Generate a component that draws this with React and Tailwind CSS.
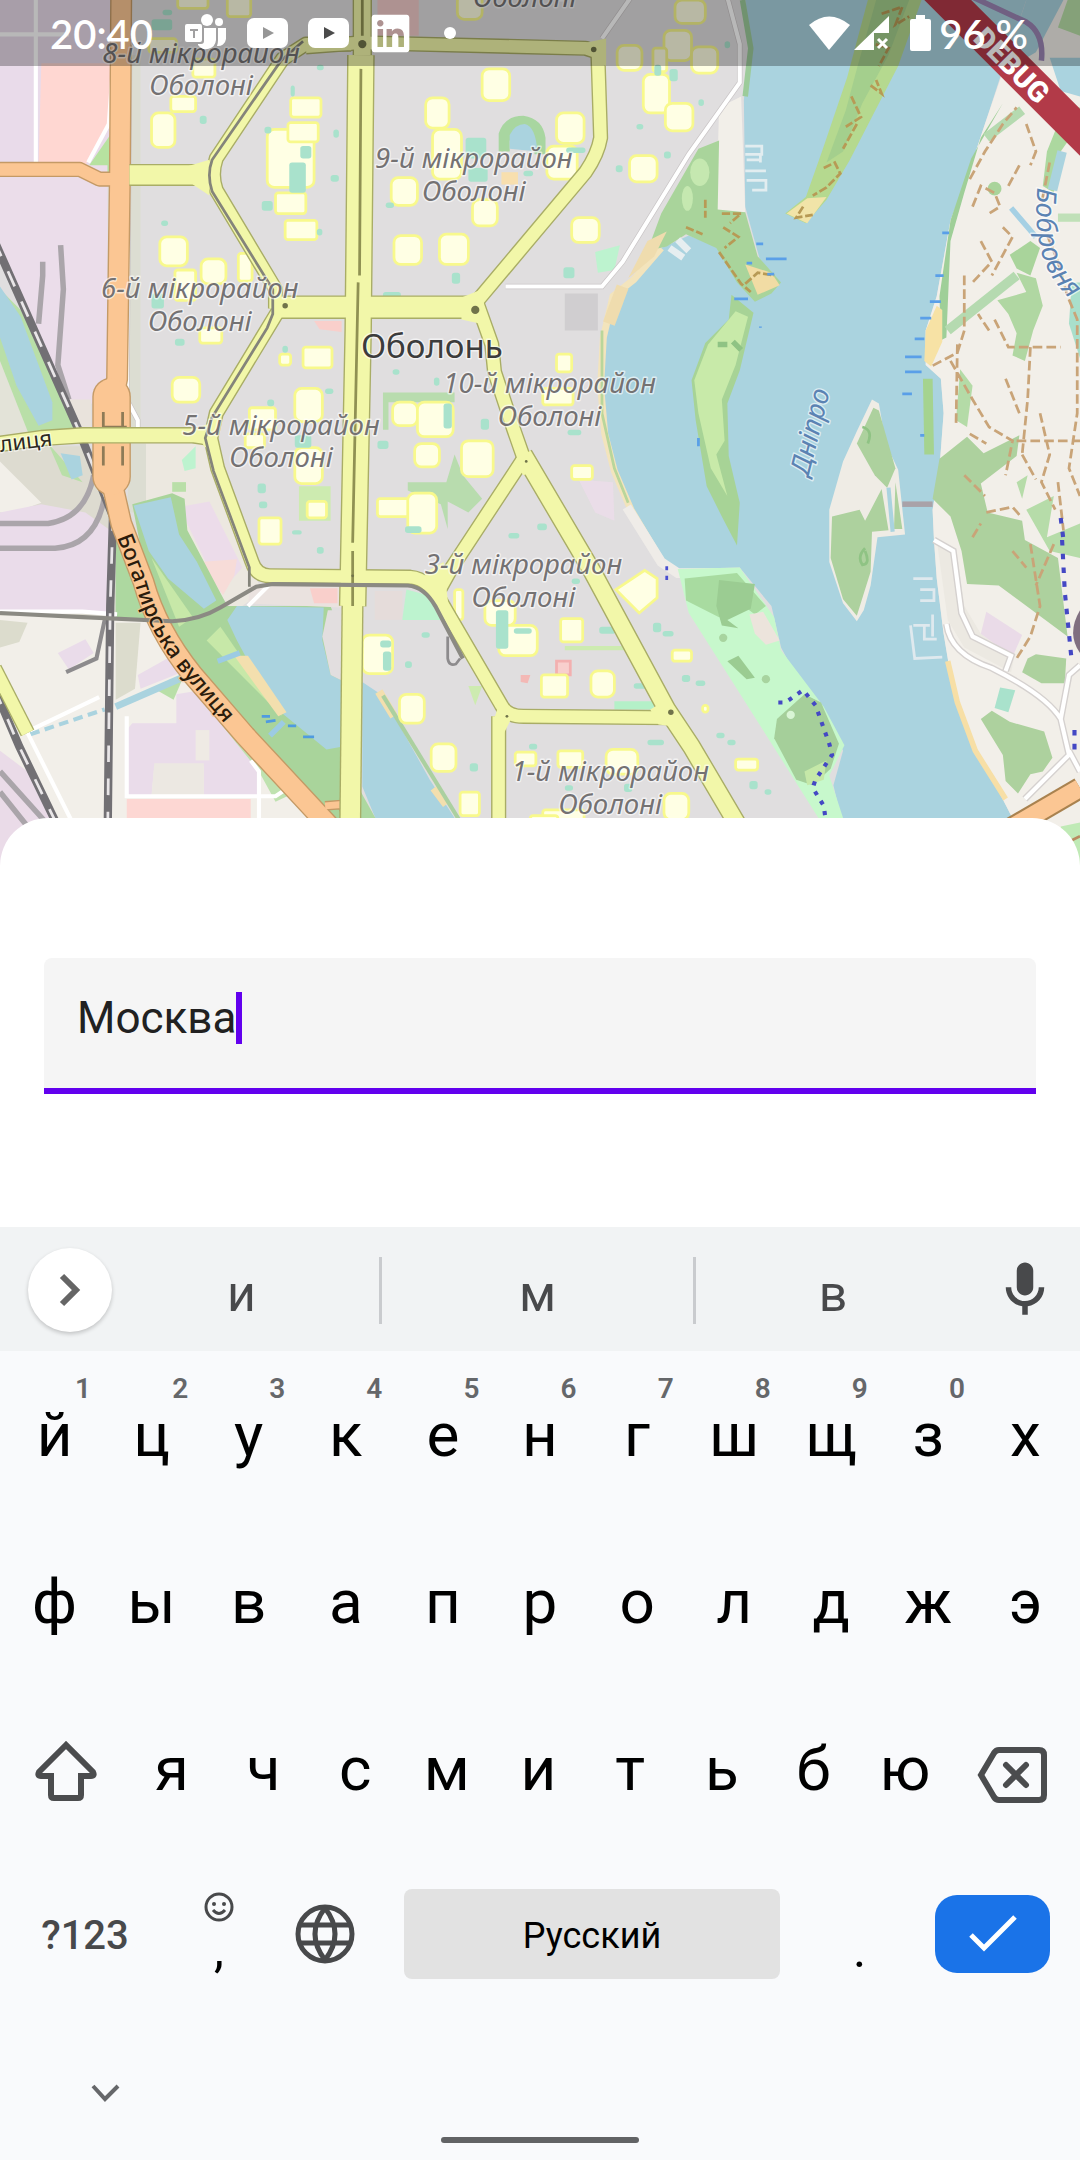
import React from "react";
import { FaLinkedin } from "react-icons/fa";

/* ---------- map data ---------- */

const SCHOOLS = [
  [129, -4, 22, 10], [165, -4, 17, 16], [140, 43, 16, 13], [124, 70, 18, 11], [110, 82, 17, 25],
  [211, 71, 22, 14], [194, 94, 34, 42], [209, 89, 22, 14], [200, 140, 22, 15], [207, 160, 23, 14],
  [350, 50, 20, 23], [309, 71, 17, 22], [314, 94, 21, 36], [284, 129, 19, 20], [343, 145, 18, 19],
  [286, 171, 20, 21], [319, 170, 21, 22], [116, 172, 20, 21], [146, 188, 18, 18], [127, 196, 15, 22],
  [173, 184, 10, 20], [490, 0, 22, 17], [448, 33, 18, 18], [482, 22, 20, 22], [502, 34, 19, 19],
  [474, 35, 10, 17], [467, 54, 19, 28], [483, 75, 20, 20], [404, 82, 20, 22], [397, 106, 22, 24],
  [457, 113, 20, 19], [415, 158, 20, 18], [332, -4, 18, 18], [108, 28, 20, 10], [145, 238, 16, 11],
  [220, 252, 21, 15], [203, 257, 8, 8], [125, 274, 20, 18], [214, 282, 20, 24], [181, 296, 19, 16],
  [178, 315, 14, 10], [214, 325, 20, 26], [188, 376, 16, 19], [285, 292, 18, 17], [303, 292, 26, 25],
  [301, 322, 18, 17], [335, 320, 23, 26], [274, 362, 25, 13], [296, 358, 21, 29], [223, 364, 14, 12],
  [404, 257, 11, 13], [394, 282, 22, 12], [415, 338, 15, 10], [263, 461, 22, 28], [290, 504, 18, 21],
  [313, 540, 18, 20], [334, 575, 14, 17], [330, 428, 6, 22], [352, 436, 22, 18], [362, 454, 28, 22],
  [407, 449, 16, 17], [393, 490, 19, 16], [429, 487, 17, 19], [488, 472, 14, 8], [405, 545, 18, 12],
  [440, 544, 23, 18], [374, 546, 15, 10], [534, 551, 16, 8], [482, 576, 18, 19], [394, 588, 30, 8],
  [510, 512, 4, 5], [385, 592, 20, 5],
];

const PITCHES = [
  [110, 14, 15, 8], [118, 7, 7, 4], [210, 118, 12, 22], [218, 106, 8, 9], [338, 100, 15, 15],
  [340, 122, 14, 10], [475, 47, 5, 8], [486, 50, 6, 9], [411, 107, 14, 4], [110, 213, 9, 11],
  [322, 293, 6, 18], [214, 316, 12, 9], [187, 351, 6, 7], [188, 364, 6, 5], [360, 443, 9, 28],
  [373, 456, 13, 4], [276, 465, 8, 5], [278, 473, 6, 14], [294, 382, 12, 5],
  [230, 397, 5, 5], [274, 320, 8, 6], [349, 304, 6, 8], [369, 387, 8, 4], [412, 312, 10, 4],
  [190, 146, 8, 7], [211, 62, 3, 8], [145, 84, 5, 6], [230, 47, 5, 4], [242, 94, 4, 6],
  [240, 127, 6, 5], [192, 92, 5, 5], [230, 166, 4, 5], [117, 160, 5, 4], [280, 147, 6, 4],
  [328, 198, 6, 8], [278, 212, 13, 7], [127, 246, 7, 5], [285, 268, 5, 4], [315, 274, 4, 6],
  [236, 282, 6, 4], [194, 290, 5, 5], [205, 251, 4, 5], [380, 124, 7, 4], [482, 110, 5, 5],
  [507, 72, 4, 5], [526, 30, 4, 5], [462, 90, 5, 4], [447, 120, 5, 5], [409, 194, 8, 8],
  [435, 455, 12, 5], [474, 452, 6, 7], [481, 458, 8, 4], [495, 490, 6, 5], [505, 494, 7, 4],
  [460, 496, 11, 4], [520, 532, 6, 4], [528, 537, 6, 4], [544, 567, 6, 6], [555, 573, 5, 4],
  [470, 537, 12, 4], [294, 480, 5, 5], [306, 459, 6, 4], [341, 554, 6, 6], [384, 540, 6, 4],
  [390, 380, 7, 5], [415, 420, 6, 4], [453, 569, 6, 6], [410, 570, 6, 4], [212, 385, 7, 3],
];

const CASING = "#a9ad66";
const YELLOW = "#f2f7a9";

const YELLOW_ROADS = [
  ["M94 127H148L157 125", 14],
  ["M255 32L222 32L205 43L157 115Q153 127 157 138L200 210V224", 9],
  ["M222 34L262 31L425 35L434 38", 9],
  ["M434 38L436 100Q434 112 425 125L346 219V230", 9],
  ["M263 -5V40", 12],
  ["M262 40L260 240L256 440", 18],
  ["M256 430L254 620", 14],
  ["M200 223H345", 15],
  ["M203 224L157 300L153 318L158 340L183 408Q186 418 196 418L298 419Q312 420 322 440L364 512Q368 520 380 520L488 521", 9],
  ["M-5 323L30 318L60 316H140L154 318", 10],
  ["M346 219L357 250L359 270L373 312L380 332", 9],
  ["M380 330L430 415L484 515L502 542L548 620", 12],
  ["M380 333L328 412L318 430", 9],
  ["M362 520V620", 9],
  ["M-4 485L20 532", 9],
];

const MICRO = [
  ["8-й мікрорайон", 146, 46, 69],
  ["9-й мікрорайон", 344, 122, 146],
  ["6-й мікрорайон", 145, 216, 240],
  ["5-й мікрорайон", 204, 316, 339],
  ["10-й мікрорайон", 399, 285, 309],
  ["3-й мікрорайон", 380, 417, 441],
  ["1-й мікрорайон", 443, 567, 591],
];

const TRAILS =
  "M704 130L715 110L728 90L738 78M745 90L752 110L748 120M706 150L712 135L722 140L726 150L718 155M700 200V240L695 256L676 266M712 175L720 190L706 205M728 165L735 172L720 200M740 120L732 135M760 170L768 190L775 215L782 232V300L776 340L784 360M722 232L732 252L770 252M748 252L746 290L742 330M690 262L706 290L718 310L735 320L730 345M695 250L694 310M718 240L710 228M755 300L762 330L756 350L766 370M738 320H784M742 330L752 348M700 345L715 360M716 372L735 368L742 376M706 390L712 380M768 350L772 385M748 395L755 440L748 462L738 478M735 400L745 412M765 395L752 425M762 118L756 148M730 275L740 300M704 315L716 322";

function CityMap() {
  return (
    <svg viewBox="0 0 784 634" className="block h-auto w-full" role="img" aria-label="Мапа: Оболонь">
      <rect width="784" height="634" fill="#e0dedf" />

      {/* land use, west side */}
      <path d="M0 0H82V120H0Z" fill="#e9dbea" />
      <path d="M30 46H80V86L62 120H28Z" fill="#ffd7d2" />
      <path d="M80 98V128L64 121Z" fill="#b7e2a0" />
      <path d="M0 120H78V275L62 300H50L0 190Z" fill="#ebddea" />
      <path d="M50 290H66V318H50Z" fill="#e9e3dc" />
      <path d="M92 40H102V316H92Z" fill="#dcddd2" />
      <path d="M0 210L15 225L62 318H0Z" fill="#b9dfa8" />
      <path d="M0 262L22 318H0Z" fill="#e3e3d8" />
      <path d="M0 208L15 230L38 292V305L28 309L12 280L0 245Z" fill="#aad3df" />
      <path d="M0 324H60L84 370V450H0Z" fill="#dddbd0" />
      <path d="M0 335L30 365L10 372H0Z" fill="#f2efe9" />
      <path d="M35 322L60 350L45 345Z" fill="#b9dfa8" />
      <path d="M44 329L58 331L60 345L52 348Z" fill="#aad3df" />
      <path d="M0 372L30 366L62 372L80 385V445H0Z" fill="#eadcea" />
      <path d="M105 322H150L190 430L170 444L150 420L105 362Z" fill="#ece8e0" />
      <path d="M95 322H106V372H92Z" fill="#dcddd2" />
      <path d="M130 368L152 364L176 412L160 430Z" fill="#ecdcea" />
      <path d="M145 408L172 406L170 418L162 432Z" fill="#f7dcd8" />
      <path d="M0 447H140L250 600V634H0Z" fill="#f2efe9" />
      <path d="M0 450L20 452L14 466L0 470Z" fill="#dcdccd" />
      <path d="M84 452H102L98 500L84 508Z" fill="#dcdccd" />
      <path d="M42 474L62 464L68 474L50 486Z" fill="#eadcea" />
      <path d="M100 490L125 476L132 488L102 500Z" fill="#eadcea" />
      <path d="M96 525H128L128 504L140 502L158 520L188 552V578H148V556H112L110 578H92V530Z" fill="#eadcea" />
      <path d="M112 554H148V578H110Z" fill="#ece8e2" />
      <path d="M142 530H152V552H142Z" fill="#efeae4" />
      <path d="M92 580H182V600H92Z" fill="#fdd7d3" />
      <path d="M0 545L20 560L42 600L20 634H0Z" fill="#eadbe8" />
      <path d="M84 372L92 372L114 450H84Z" fill="#add8a0" />
      <path d="M112 500L132 494L126 508Z" fill="#b9dfa8" />
      <path d="M140 500L215 575L200 582L188 560Z" fill="#bfe2b0" />
      <path d="M96 366L125 358L134 362L136 385L165 440H240L250 470V600H240L112 448Z" fill="#a9d49b" />
      <path d="M110 405L140 448L130 455Z" fill="#c7e8a8" />
      <path d="M160 455L205 520L190 505L150 465Z" fill="#c7e8a8" />
      <path d="M97 367L124 361L130 388L143 408L157 436L148 442L122 420L108 400Z" fill="#aad3df" />
      <path d="M172 440L235 441L234 465L240 490L248 494V542L237 544L205 518L185 489L172 465L165 450Z" fill="#aad3df" />
      <path d="M170 476L180 476L208 517L202 520Z" fill="#f3dfae" />
      <path d="M238 443H248V494L240 490L234 462Z" fill="#e2dedf" />
      <path d="M182 425H248V441L180 438Z" fill="#eae2df" />
      <path d="M225 427H245V438H228Z" fill="#f9cfcb" />
      <path d="M263 495L275 503L288 523L312 566L334 600H275L263 571Z" fill="#aad3df" />
      <path d="M262 575L276 600H262Z" fill="#add8a0" />
      <path d="M275 502L286 520M315 572L324 584" stroke="#f3dfae" strokeWidth="6" />
      <path d="M278 505L335 598" stroke="#abd0a0" strokeWidth="3" fill="none" />
      <path d="M84 513L132 492" stroke="#aad3df" strokeWidth="5" />
      <path d="M22 533L76 515" stroke="#aad3df" strokeWidth="3" strokeDasharray="7 4" />
      <path d="M158 480L174 474M196 534L206 524" stroke="#9ccbe3" strokeWidth="4" />
      <path d="M272 429H292V450H272Z" fill="#e5dcda" />
      <path d="M292 450L295 428L310 432L320 450Z" fill="#bdf3cf" />
      <path d="M228 233H248V241L232 239Z" fill="#f9cfcb" />
      <path d="M274 0H304V26H274Z" fill="#f1cbc9" />
      <path d="M132 334L142 324V340L134 342Z" fill="#bdf3cf" />
      <path d="M125 350H135V357H125Z" fill="#b9dfa8" />
      <path d="M432 183L450 178L446 196L434 198Z" fill="#bdf3cf" />
      <path d="M217 353H240V378H217Z" fill="#cdebb0" />
      <path d="M278 285H330V292H282V312H278ZM296 350H324L330 330L336 345L350 362L340 372L325 364V384L320 366L296 356Z" fill="#b8dcae" />
      <path d="M410 469H455V472H410ZM340 498H350L345 512Z" fill="#cdebb0" />
      <path d="M446 509H476L474 515H446Z" fill="#b4f0c8" />
      <path d="M420 348L445 350L446 378L432 372Z" fill="#ecdcea" opacity=".8" />
      <path d="M410 213H434V240H410Z" fill="#d0ced0" />
      <path d="M404 480H414V490H404Z" fill="#f8cfcd" stroke="#f3b0b0" strokeWidth="2" />
      <path d="M378 490L385 490L383 496L378 495Z" fill="#f3b8b5" />
      <path d="M362 110V97Q366 84 380 84Q394 86 396 100V112H388V102H370V110Z" fill="#a8d6a0" />
      <path d="M370 108V98Q374 90 381 90Q389 92 390 110Z" fill="#aad3df" />
      <path d="M364 125H376V134H364Z" fill="#f8dfae" />

      {/* schools and sports pitches */}
      {SCHOOLS.map(([x, y, w, h], i) => (
        <rect key={i} x={x} y={y} width={w} height={h} rx={Math.min(w, h) > 16 ? 5 : 2} fill="#ffffe4" stroke="#f8f98c" strokeWidth="2" />
      ))}
      <path d="M447 428L468 414L477 420V434L464 445Z" fill="#ffffe4" stroke="#f8f98c" strokeWidth="2" />
      {PITCHES.map(([x, y, w, h], i) => (
        <rect key={i} x={x} y={y} width={w} height={h} rx="2" fill="#a9e2cc" />
      ))}

      {/* Dnipro */}
      <path
        d="M541 0L545 35L542 48L540 73L541 150L552 190L535 187L515 177L500 171L480 180L460 203L445 215L438 245L436 280L438 310L445 340L457 370L480 405L492 413L537 412L560 440L567 470L583 500L600 520L612 545L605 570L612 600V634H760L735 594L715 555L700 525L690 490L685 460L680 420L678 392L677 370L682 340L685 300L683 275L672 265L672 240L680 215L690 160L705 120L715 90L728 50L745 0Z"
        fill="#aad3df"
      />
      <path
        d="M784 0H770L752 35L728 52L715 90L705 120L690 160L680 215L672 240V265L683 275L685 300L682 340L677 370L678 392L680 420L685 460L690 490L700 525L715 555L735 594L760 634H784Z"
        fill="#f2efe9"
      />
      <path d="M745 0H772L752 38L728 52Z" fill="#aad3df" />
      <path d="M762 42H784V70L770 66Z" fill="#aad3df" />
      <path d="M775 0H784V26L768 20Z" fill="#b9dfa8" />
      {/* west bank beach */}
      <path d="M480 180L460 203L445 215L438 245L436 280L439 315L446 342L458 370L480 407" stroke="#f3e4bc" strokeWidth="5" fill="none" />
      <path d="M452 208L442 235" stroke="#efdcae" strokeWidth="9" />
      <path d="M437 240L437 300L446 340L456 365" stroke="#b9d69b" strokeWidth="2" fill="none" />
      <path d="M455 368L480 408L492 416H537" stroke="#efece8" strokeWidth="7" fill="none" />
      {/* peninsula */}
      <path d="M522 78L538 70L541 154H520Z" fill="#f2efe9" />
      <path d="M539 0L545 35L541 70" stroke="#9ccb9a" strokeWidth="4" fill="none" />
      <path d="M507 108L522 102L521 152L541 154L550 186L567 205L560 213L548 219L535 205L520 180L498 170L484 179L470 182L480 155Z" fill="#a9d49b" />
      <ellipse cx="508" cy="125" rx="7" ry="10" fill="#c5e8b0" />
      <ellipse cx="499" cy="144" rx="4" ry="9" fill="#c5e8b0" />
      <path d="M484 168L475 186L456 202L470 175Z" fill="#efdcae" />
      <path d="M541 192L560 198L566 207L550 214Z" fill="#f1dca4" />
      <path d="M524 155H538L530 162M512 145V158M525 165L536 172L526 180M522 183L538 206L545 212M498 165L510 170M541 206L550 198L562 200" stroke="#b79a55" strokeWidth="2" strokeDasharray="6 2" fill="none" />
      <path d="M541 106H553V112H541M542 116H553M541 124H556M542 131H556V138H546M552 112V118" stroke="#e2edf0" strokeWidth="2" fill="none" />
      <path d="M486 180L496 187M492 174L500 182" stroke="#e6eef0" strokeWidth="5" />
      {/* northern island */}
      <path d="M630 0H669L652 48L617 116L600 145L585 162L570 155L585 143L597 109L615 56Z" fill="#b5d98f" />
      <path d="M636 0H660L645 40L626 75L612 110L600 118L614 80L622 50Z" fill="#a4cf8d" />
      <path d="M571 155L586 144L600 143L586 162Z" fill="#f1e4a8" />
      <path d="M640 10L655 5L650 18L660 12M628 30L645 35L638 48M618 70L625 85L614 92M632 62L640 68L636 58M622 90L612 108M598 122L606 118L610 126L600 136L590 142M583 150L578 158L590 156" stroke="#b79a55" strokeWidth="2" strokeDasharray="6 2" fill="none" />
      {/* long island */}
      <path d="M531 214L547 227L537 269L528 293L529 331L537 365L535 396L525 377L513 353L505 305L502 276L512 249L529 232Z" fill="#a7d396" />
      <path d="M534 226L543 230L534 265L524 290L526 320L520 330L528 360L516 340L507 300L504 276L514 250Z" fill="#c8eaa9" />
      <path d="M521 250H528M532 248L538 254" stroke="#8fc384" strokeWidth="4" />
      {/* eastern island */}
      <path d="M633 290L638 293L643 322L652 341L657 388L637 390L632 425L627 443L622 451L612 438L602 408L602 370L612 335L622 313Z" fill="#efece5" />
      <path d="M634 296L638 298L650 340L644 354L635 345L622 322Z" fill="#add19e" />
      <path d="M604 375L624 370L628 378L640 355L645 385L633 386L632 415L622 447L612 435L603 405Z" fill="#add19e" />
      <path d="M650 350L655 384H649Z" fill="#add19e" />
      <path d="M645 354L648 386" stroke="#aad3df" strokeWidth="3" />
      <path d="M626 310Q634 312 630 322M628 398Q622 404 626 410Q632 410 628 400" stroke="#8fc384" strokeWidth="2" fill="none" />

      {/* riverside park */}
      <path d="M492 413L537 412L562 448L567 472L598 513L613 541L602 563L614 600H598L552 527L500 445Z" fill="#c7f8cc" />
      <path d="M497 420L535 416L556 440L548 446L540 440L522 448L498 436Z" fill="#a8dba0" />
      <path d="M522 421L548 424L545 442L528 450L536 456L524 454L520 440Z" fill="#9bcc92" />
      <path d="M544 446L554 444L566 465L556 468L548 460Z" fill="#ece4dc" />
      <path d="M528 480L536 476L548 492L542 493Z" fill="#9bcc92" />
      <circle cx="556" cy="493" r="3" fill="#a8d49f" />
      <circle cx="525" cy="463" r="3" fill="#a8d49f" />
      <path d="M584 504L596 510L609 540L603 558L590 570L578 566L562 536L564 522Z" fill="#a5cf9a" />
      <circle cx="574" cy="519" r="3" fill="#d9f5d5" />
      <path d="M584 560L600 552L598 566L586 570Z" fill="#c5e8a8" />
      <path d="M565 510H570L583 501L592 512L602 540L604 548L592 566L590 572L598 585L600 600" stroke="#4448c4" strokeWidth="3" strokeDasharray="3 5" fill="none" />
      <path d="M484 411V421" stroke="#4a4fd0" strokeWidth="2" strokeDasharray="3 4" />

      {/* east bank */}
      <path d="M728 75L712 100L700 140L690 175L687 245L683 247L682 215L690 160L705 115Z" fill="#9fcf98" />
      <path d="M742 80L716 100M738 200L688 240" stroke="#b5dab0" strokeWidth="7" />
      <path d="M680 222L684 225V248L676 266L671 262L672 240Z" fill="#f7e2a5" />
      <path d="M670 275H677L678 330H671Z" fill="#a5d38f" />
      <path d="M697 268L706 280L702 310L694 305Z" fill="#b4dba7" />
      <path d="M724 218L745 212L738 198L752 202L757 222L750 240L744 262L735 258L738 242L732 228Z" fill="#b0d7a2" />
      <path d="M733 185L748 175L755 180L748 200L738 195Z" fill="#a9d49b" />
      <circle cx="722" cy="137" r="5" fill="#a9d49b" />
      <path d="M760 110L772 80L784 78V90L770 110L765 140L757 135Z" fill="#acd89f" />
      <path d="M771 110L764 138" stroke="#aad3df" strokeWidth="7" />
      <path d="M768 155H784V161H768Z" fill="#c0e0b8" />
      <path d="M734 151L746 165L752 172" stroke="#a5d0e4" strokeWidth="4" fill="none" />
      <path d="M778 205H784V260L776 235Z" fill="#a9dfcb" />
      <path d="M682 333L702 317L714 329L740 316L738 331L712 351L717 372L742 378L744 392L768 405L775 462L752 445L725 425L702 424L698 400L690 375L677 362Z" fill="#add19e" />
      <path d="M738 350L746 345L742 362M745 370L765 360L760 390L784 380V405L762 400Z" fill="#b6dca9" />
      <path d="M680 392L694 398L700 440L712 460L736 478L734 488L700 470L688 450Z" fill="#ece9e2" />
      <path d="M716 444L742 461L735 477L712 460Z" fill="#eadbe8" />
      <path d="M746 478L752 475L774 478L773 496L756 496L742 488Z" fill="#add19e" />
      <path d="M726 499L737 501L732 517L722 514Z" fill="#a9e2cc" />
      <path d="M712 522L720 516L733 524L758 531L764 550L757 560L748 562L739 576L730 567L728 548Z" fill="#add19e" />
      <path d="M688 480L695 510L708 545L730 580" stroke="#f7dfa6" strokeWidth="4" fill="none" />
      <path d={TRAILS} fill="none" stroke="#c9a478" strokeWidth="2" strokeDasharray="7 3" />
      <path d="M678 392L692 400L698 445L706 462L734 476L730 487M687 453Q690 475 720 485Q760 505 770 522L776 548L744 580M776 545L784 560M770 522L776 490L784 483" fill="none" stroke="#d5d1cf" strokeWidth="5" />
      <path d="M678 392L692 400L698 445L706 462L734 476L730 487M687 453Q690 475 720 485Q760 505 770 522L776 548L744 580M776 545L784 560M770 522L776 490L784 483" fill="none" stroke="#fff" strokeWidth="3" />
      <path d="M771 392L773 430L778 480M780 530V548M770 376L772 392" stroke="#4448c4" strokeWidth="3" strokeDasharray="4 6" fill="none" />
      <path d="M663 420H677M668 428H678V436H668M663 454H675M661 454L664 478L684 477M671 454V464H680M677 446V462" stroke="#dfe9ee" strokeWidth="2" fill="none" />
      <path d="M655 366H677" stroke="#a9a2a8" strokeWidth="4" />
      <path d="M784 443Q774 460 784 474Z" fill="#806f80" />
      <path d="M724 607L784 572" stroke="#a9824f" strokeWidth="16" />
      <path d="M724 607L784 572" stroke="#fbc693" strokeWidth="13" />
      <path d="M770 600L784 597V634H775Z" fill="#c0eab6" />
      <path d="M774 612L784 607" stroke="#b98b60" strokeWidth="2" />
      <path d="M556 188H571M542 191H546M549 177H554M557 199H562M684 169H689M679 200H685M675 219H683M668 231H676M664 246H671M657 259H669M657 270H669M655 286H662M668 316H671M533 217H543M552 237V238M507 318V324" stroke="#5a9fe8" strokeWidth="2" />
      <path d="M190 520H196M193 524L200 523M209 527H215M220 535H228" stroke="#4f9be0" strokeWidth="2" />
      <path d="M702 -4L745 16Q758 24 756 44" fill="none" stroke="#9b86b5" strokeWidth="4" />

      {/* minor roads */}
      <g fill="none" stroke="#c9c5c6" strokeWidth="4">
        <path d="M367 208H437L452 190L500 112L537 60V32L528 -2M458 -2L437 28" />
        <path d="M94 46L92 290L100 305V316" />
      </g>
      <g fill="none" stroke="#fff" strokeWidth="3">
        <path d="M367 208H437L452 190L500 112L537 60V32L528 -2M458 -2L437 28" />
        <path d="M94 0L92 290L100 305V316" />
        <path d="M26 0V120M0 25H50M82 0V48L79 90L64 118" />
        <path d="M92 520V578H200L212 570M188 600V560L182 552" />
        <path d="M20 532L54 600M22 530L72 506" />
        <path d="M0 444H60L85 446M180 440L196 424" />
      </g>

      {/* railways */}
      <g fill="none" stroke="#8d8b8d">
        <path d="M325 462V478Q326 484 331 482L334 478" strokeWidth="2" />
        <path d="M48 488L70 478L76 450" strokeWidth="3" />
      </g>
      <g fill="none" stroke="#aaa5aa" strokeWidth="4">
        <path d="M31 190V200L28 235M44 178L46 210L42 265L50 290M0 380H35Q62 376 68 345M0 398H40Q70 396 76 360M0 560L36 600M0 575L20 600" />
      </g>
      <g fill="none" stroke="#727074" strokeWidth="6">
        <path d="M-4 175L57 312L82 375L80 440L78 620" />
        <path d="M-4 500L14 542L42 600" />
      </g>
      <g fill="none" stroke="#e9e6e8" strokeWidth="2" strokeDasharray="12 12">
        <path d="M-4 175L57 312L82 375L80 440L78 620" />
        <path d="M-4 500L14 542L42 600" />
      </g>

      {/* primary roads */}
      {[["#c49a66", 2], ["#fbc693", 0]].map(([color, extra]) => (
        <g key={color} fill="none" stroke={color} strokeLinejoin="round">
          <path d="M0 123H58L72 130H86" strokeWidth={9 + extra} />
          <path d="M88 -5L87 130L85 275L80 300V345L88 380L104 422Q114 458 140 490L178 534L256 618" strokeWidth={14 + extra} />
          <path d="M81 288V346" strokeWidth={26 + extra} strokeLinecap="round" />
          <path d="M236 585L248 584L256 600" strokeWidth={5 + extra} />
        </g>
      ))}
      <path d="M75 299V312M89 299V312M75 324V338M89 324V338M76 310H92" stroke="#8e7b57" strokeWidth="2" />

      {/* secondary roads */}
      {YELLOW_ROADS.map(([d, w]) => (
        <path key={d} d={d} fill="none" stroke={CASING} strokeWidth={w + 2} strokeLinejoin="round" />
      ))}
      {YELLOW_ROADS.map(([d, w]) => (
        <path key={d} d={d} fill="none" stroke={YELLOW} strokeWidth={w} strokeLinejoin="round" />
      ))}
      <g fill={YELLOW}>
        <path d="M135 121L152 116V142L140 134ZM335 216L350 210L353 236L335 232ZM376 340L380 324L388 342L380 345ZM472 515L484 508L494 528L478 526ZM362 512L372 520L366 532L358 524ZM308 416L322 408L326 444L316 438ZM142 311L156 306L158 330L148 324ZM425 31L440 28V48L434 46Z" />
      </g>
      <path d="M262 50L261 200M260 205L256 394M256 400V440M263 0V26" fill="none" stroke="#8f9153" strokeWidth="2" />
      <path d="M0 445L60 448L125 451Q145 450 160 441L186 426L198 424L296 425Q308 426 316 440L336 478" fill="none" stroke="#8b8a83" strokeWidth="3" />
      <g fill="none" stroke="#84847a" strokeWidth="2">
        <path d="M220 30L204 44L154 116Q150 127 154 139L198 210V228L194 238L154 303L149 318L155 342L181 412V426" />
      </g>
      <g fill="#70734a">
        <circle cx="263" cy="32" r="3" />
        <circle cx="431" cy="36" r="2" />
        <circle cx="345" cy="225" r="3" />
        <circle cx="256" cy="418" r="1" />
        <circle cx="382" cy="335" r="1" />
        <circle cx="368" cy="520" r="1" />
        <circle cx="487" cy="517" r="2" />
        <circle cx="207" cy="222" r="2" />
      </g>

      {/* labels */}
      <g fontFamily="'Noto Sans', sans-serif" stroke="#fff" strokeWidth="2" strokeOpacity=".6" paintOrder="stroke" strokeLinejoin="round">
        <g fontSize="20" fontStyle="italic" fill="#747273" textAnchor="middle">
          {MICRO.map(([name, x, y1, y2]) => (
            <React.Fragment key={name}>
              <text x={x} y={y1}>{name}</text>
              <text x={x} y={y2}>Оболоні</text>
            </React.Fragment>
          ))}
          <text x="381" y="5">Оболоні</text>
        </g>
        <text x="262" y="260" fontSize="24" fill="#3c3c3c">Оболонь</text>
        <text transform="translate(587 346) rotate(-76)" fontSize="20" fontStyle="italic" fill="#5b83b3">Дніпро</text>
        <path id="creek" d="M753 136Q750 170 759 192T798 234" fill="none" stroke="none" />
        <text fontSize="20" fontStyle="italic" fill="#5b83b3"><textPath href="#creek">Бобровня</textPath></text>
        <text transform="translate(-7 329) rotate(-7)" fontSize="16" fill="#2b2822">улиця</text>
        <path id="bohatyrska" d="M85 390L98 424Q108 460 134 491L182 548" fill="none" stroke="none" />
        <text fontSize="16" fontWeight="500" fill="#2b1c0c" stroke="#fbc693"><textPath href="#bohatyrska">Богатирська вулиця</textPath></text>
      </g>

      {/* debug banner */}
      <path d="M671 0H705L784 79V113Z" fill="#b23a48" />
      <text transform="translate(735 47) rotate(45)" y="8" textAnchor="middle" fontFamily="Roboto, sans-serif" fontWeight="900" fontSize="21" fill="#fff">DEBUG</text>
    </svg>
  );
}

/* ---------- status bar ---------- */

function TeamsIcon() {
  return (
    <svg width="42" height="40" viewBox="0 0 42 40" fill="#fff" aria-hidden="true">
      <circle cx="22" cy="7" r="6" />
      <circle cx="34" cy="9" r="4" />
      <path fillRule="evenodd" d="M2 11H15Q17 11 17 13V27Q17 29 15 29H2Q0 29 0 27V13Q0 11 2 11ZM5 16V18H8V25H10V18H13V16Z" />
      <path d="M19 15H31V27A10 10 0 0 1 13 32V31H16Q19 31 19 28Z" />
      <path d="M33 15H41V26A8 8 0 0 1 32 33Q33 30 33 27Z" />
    </svg>
  );
}

function TubeIcon({ play }) {
  return (
    <svg width="41" height="30" viewBox="0 0 41 30" aria-hidden="true">
      <rect width="41" height="30" rx="7" fill="#fff" />
      <path d="M16 9L27 15L16 21Z" fill={play} />
    </svg>
  );
}

function StatusBar() {
  return (
    <header className="absolute inset-x-0 top-0 flex h-[66px] items-center bg-black/28 pr-[52px] pl-[50px] font-['Lato',sans-serif] text-[40px] leading-none font-semibold text-white">
      <span className="pt-0.5">20:40</span>
      <div className="ml-8 flex items-center gap-5">
        <TeamsIcon />
        <TubeIcon play="#969696" />
        <TubeIcon play="#4b4b4b" />
        <FaLinkedin size={43} aria-hidden="true" />
      </div>
      <span className="ml-8 size-3 rounded-full bg-white" />
      <div className="ml-auto flex items-center">
        <svg width="41" height="34" viewBox="0 0 41 34" fill="#fff" aria-hidden="true">
          <path d="M0 9Q20 -8 41 9L20 34Z" />
        </svg>
        <svg width="36" height="34" viewBox="0 0 36 34" className="ml-1" fill="#fff" aria-hidden="true">
          <path d="M35 0V17H20V34H0Z" />
          <path d="M24 23L33 32M33 23L24 32" stroke="#fff" strokeWidth="3" />
        </svg>
        <svg width="21" height="36" viewBox="0 0 21 36" className="ml-5" fill="#fff" aria-hidden="true">
          <path d="M6 0H15V4H19Q21 4 21 6V34Q21 36 19 36H2Q0 36 0 34V6Q0 4 2 4H6Z" />
        </svg>
        <span className="ml-2 pt-0.5">96&nbsp;%</span>
      </div>
    </header>
  );
}

/* ---------- keyboard ---------- */

const ROW1 = ["й", "ц", "у", "к", "е", "н", "г", "ш", "щ", "з", "х"];
const HINTS = ["1", "2", "3", "4", "5", "6", "7", "8", "9", "0"];
const ROW2 = ["ф", "ы", "в", "а", "п", "р", "о", "л", "д", "ж", "э"];
const ROW3 = ["я", "ч", "с", "м", "и", "т", "ь", "б", "ю"];

function Key({ children, hint }) {
  return (
    <button type="button" className="relative flex h-full items-center justify-center text-[62px] leading-none text-black">
      {hint && <span className="absolute top-6 right-3 text-[28px] leading-none font-semibold text-[#65676a]">{hint}</span>}
      {children}
    </button>
  );
}

function Suggestion({ children, divided }) {
  return (
    <button
      type="button"
      className={
        divided
          ? "flex h-[67px] items-center justify-center border-x-3 border-[#c9cbce] pt-2"
          : "flex h-[67px] items-center justify-center pt-2"
      }
    >
      {children}
    </button>
  );
}

function SuggestionBar() {
  return (
    <div className="grid h-[124px] grid-cols-[104px_275fr_317fr_274fr_110px] items-center bg-[#f1f3f4] pt-0.5 text-[50px] leading-none text-[#48494b]">
      <button type="button" aria-label="Більше" className="ml-7 flex size-[84px] items-center justify-center rounded-full bg-white shadow-[0_2px_4px_rgba(0,0,0,0.2)]">
        <svg width="22" height="34" viewBox="0 0 22 34" fill="none" stroke="#656565" strokeWidth="6" aria-hidden="true">
          <path d="M3 3L17 17L3 31" />
        </svg>
      </button>
      <Suggestion>и</Suggestion>
      <Suggestion divided>м</Suggestion>
      <Suggestion>в</Suggestion>
      <button type="button" aria-label="Голосове введення" className="flex items-center justify-center">
        <svg width="66" height="66" viewBox="0 0 24 24" fill="#48494b" aria-hidden="true">
          <path d="M12 14c1.66 0 3-1.34 3-3V5c0-1.66-1.34-3-3-3S9 3.34 9 5v6c0 1.66 1.34 3 3 3zm5-3c0 2.760-2.240 5-5 5s-5-2.240-5-5H5c0 3.530 2.610 6.430 6 6.920V21h2v-3.080c3.390-.490 6-3.390 6-6.920h-2z" />
        </svg>
      </button>
    </div>
  );
}

function Keyboard() {
  return (
    <section aria-label="Клавіатура" className="flex flex-1 flex-col bg-[#f9fafc]">
      <SuggestionBar />
      <div className="grid h-[167px] grid-cols-11 px-1.5">
        {ROW1.map((k, i) => <Key key={k} hint={HINTS[i]}>{k}</Key>)}
      </div>
      <div className="grid h-[167px] grid-cols-11 px-1.5">
        {ROW2.map((k) => <Key key={k}>{k}</Key>)}
      </div>
      <div className="grid h-[167px] grid-cols-[120px_repeat(9,1fr)_123px] px-1.5">
        <button type="button" aria-label="Shift" className="flex items-center justify-center pt-1">
          <svg width="62" height="62" viewBox="0 0 62 62" fill="none" stroke="#4b4c4e" strokeWidth="6" aria-hidden="true">
            <path d="M31 5L4 32Q2 36 6 36H16V55Q16 58 19 58H43Q46 58 46 55V36H56Q60 36 58 32Z" />
          </svg>
        </button>
        {ROW3.map((k) => <Key key={k}>{k}</Key>)}
        <button type="button" aria-label="Видалити" className="flex items-center justify-center pt-3">
          <svg width="70" height="56" viewBox="0 0 70 56" fill="none" stroke="#4b4c4e" strokeWidth="6" strokeLinecap="round" aria-hidden="true">
            <path d="M17 50L4 28L17 6Q19 3 22 3H62Q67 3 67 8V48Q67 53 62 53H22Q19 53 17 50Z" />
            <path d="M29 18L49 38M49 18L29 38" />
          </svg>
        </button>
      </div>
      <div className="grid h-[164px] grid-cols-[158px_110px_102px_1fr_103px_163px] items-center px-1.5">
        <button type="button" className="pt-1 text-[40px] leading-none font-medium text-[#48494b]">?123</button>
        <button type="button" aria-label="Кома та емодзі" className="flex flex-col items-center">
          <svg width="30" height="30" viewBox="0 0 30 30" fill="none" stroke="#48494b" strokeWidth="3" aria-hidden="true">
            <circle cx="15" cy="15" r="13" />
            <path d="M9 18Q15 25 21 18" />
            <circle cx="10" cy="12" r="2" fill="#48494b" stroke="none" />
            <circle cx="20" cy="12" r="2" fill="#48494b" stroke="none" />
          </svg>
          <span className="text-[50px] leading-[54px] text-black">,</span>
        </button>
        <button type="button" aria-label="Змінити мову" className="flex justify-center">
          <svg width="60" height="60" viewBox="0 0 60 60" fill="none" stroke="#48494b" strokeWidth="5" aria-hidden="true">
            <circle cx="30" cy="30" r="27" />
            <path d="M30 4Q10 30 30 56M30 4Q50 30 30 56M6 21H54M6 39H54" />
          </svg>
        </button>
        <button type="button" className="mx-7 h-[90px] rounded-lg bg-[#e2e2e2] pt-1 text-[36px] leading-none text-black">Русский</button>
        <button type="button" className="pt-8 text-[50px] leading-[50px] text-black">.</button>
        <button type="button" aria-label="Готово" className="mx-6 flex h-[78px] items-center justify-center rounded-[22px] bg-[#1a73e8]">
          <svg width="48" height="38" viewBox="0 0 48 38" fill="none" stroke="#fff" strokeWidth="5" aria-hidden="true">
            <path d="M2 20L15 33L46 2" />
          </svg>
        </button>
      </div>
      <div className="flex flex-1 flex-col justify-between pt-[68px] pb-[17px]">
        <button type="button" aria-label="Сховати клавіатуру" className="ml-[91px] self-start">
          <svg width="29" height="18" viewBox="0 0 29 18" fill="none" stroke="#66676a" strokeWidth="4" aria-hidden="true">
            <path d="M2 2L14 15L27 2" />
          </svg>
        </button>
        <div className="h-1.5 w-[198px] self-center rounded-sm bg-[#626365]" />
      </div>
    </section>
  );
}

export default function App() {
  return (
    <main className="flex min-h-screen flex-col bg-white font-['Roboto',sans-serif]">
      <div className="relative">
        <CityMap />
        <StatusBar />
      </div>
      <section className="relative -mt-[55px] rounded-t-[48px] bg-white px-11 pt-[140px] pb-[133px]">
        <label className="flex h-[136px] items-start rounded-t-lg border-b-6 border-[#6200ee] bg-[#f5f5f5] pr-8 pl-[33px] pt-[34px]">
          <input
            type="text"
            aria-label="Місто"
            defaultValue="Москва"
            className="h-[52px] [field-sizing:content] bg-transparent text-[44px] leading-[52px] text-[#212121] outline-none"
          />
          <span className="h-[52px] w-1.5 bg-[#6200ee]" />
        </label>
      </section>
      <Keyboard />
    </main>
  );
}
